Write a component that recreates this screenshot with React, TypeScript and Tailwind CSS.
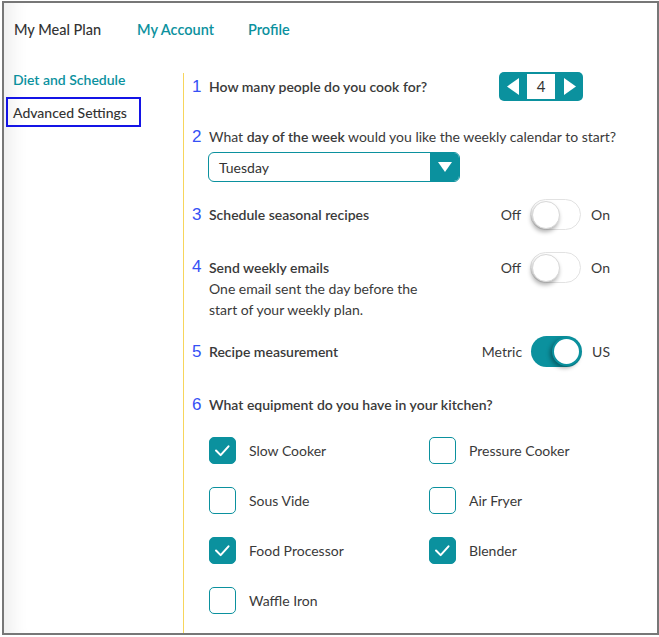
import React from 'react'

const TEAL = 'bg-[#0b919e]'

function Num({ n }: { n: number }) {
  return (
    <span className="w-[17px] shrink-0 text-[17px] leading-[20px] text-[#3551f5] font-['Liberation_Sans',Arial,sans-serif]">
      {n}
    </span>
  )
}

function Toggle({ on }: { on: boolean }) {
  if (on) {
    return (
      <div className="w-[51px] h-[31px] rounded-full bg-[#0b919e] flex items-center justify-end pr-[1px]">
        <div className="w-[29px] h-[29px] rounded-full bg-white border-2 border-[#0b919e] shadow-[-2px_2px_4px_rgba(0,0,0,0.35)]" />
      </div>
    )
  }
  return (
    <div className="w-[51px] h-[31px] rounded-full bg-white border border-[#e2e2e2] flex items-center pl-[1px]">
      <div className="w-[28px] h-[28px] rounded-full bg-white border border-[#d8d8d8] shadow-[-1px_3px_4px_rgba(0,0,0,0.3)]" />
    </div>
  )
}

function ToggleRow({ off, on, value }: { off: string; on: string; value: boolean }) {
  return (
    <div className="flex items-center text-[14px] text-[#3a3a3a]">
      <span className="mr-[9px]">{off}</span>
      <Toggle on={value} />
      <span className="ml-[10px]">{on}</span>
    </div>
  )
}

function Check({ label, checked }: { label: string; checked: boolean }) {
  return (
    <div className="flex items-center h-[27px]">
      <div
        className={`w-[27px] h-[27px] rounded-[5px] border border-[#0b919e] flex items-center justify-center ${checked ? TEAL : 'bg-white'}`}
      >
        {checked && (
          <svg width="27" height="27" viewBox="0 0 27 27">
            <polyline points="6.5,13.5 11.5,18.5 20,9" fill="none" stroke="white" strokeWidth="2.2" strokeLinecap="round" strokeLinejoin="round" />
          </svg>
        )}
      </div>
      <span className="ml-[13px] text-[14px] text-[#3a3a3a]">{label}</span>
    </div>
  )
}

const EQUIPO = [
  { label: 'Slow Cooker', checked: true },
  { label: 'Pressure Cooker', checked: false },
  { label: 'Sous Vide', checked: false },
  { label: 'Air Fryer', checked: false },
  { label: 'Food Processor', checked: true },
  { label: 'Blender', checked: true },
  { label: 'Waffle Iron', checked: false },
]

export default function App() {
  return (
    <div className="w-[659px] h-[637px] bg-white font-['Lato','Noto_Sans',sans-serif] text-[#333]">
      <div className="ml-[2px] mt-[1px] w-[657px] h-[634px] border-2 border-[#777] bg-white shadow-[inset_22px_0_18px_-14px_rgba(0,0,0,0.07)] flex flex-col">
        {/* Top nav */}
        <div className="h-[67px] pt-[17px] pl-[10px] flex text-[14.5px] leading-[20px]">
          <span className="font-medium text-[#333]">My Meal Plan</span>
          <span className="ml-[36px] font-semibold text-[#0b919e]">My Account</span>
          <span className="ml-[34px] font-semibold text-[#0b919e]">Profile</span>
        </div>

        <div className="flex flex-1">
          {/* Sidebar */}
          <div className="w-[179px] shrink-0 text-[14px]">
            <div className="pl-[9px] leading-[20px] font-semibold text-[#0b919e]">Diet and Schedule</div>
            <div className="ml-[2px] mt-[7px] w-[135px] h-[30px] border-2 border-[#1414e6] pl-[5px] flex items-center font-medium text-[#333]">
              Advanced Settings
            </div>
          </div>

          {/* Main */}
          <div className="flex-1 border-l border-[#f7d55c] pl-[8px] pt-[2px] mt-[3px] text-[14px]">
            {/* 1 */}
            <div className="w-[418px] h-[29px] flex items-center -mt-[3px]">
              <Num n={1} />
              <span className="flex-1 font-semibold text-[#3a3a3a]">How many people do you cook for?</span>
              <div className={`mr-[27px] w-[84px] h-[29px] rounded-[5px] ${TEAL} flex items-center`}>
                <div className="w-[28px] flex justify-center">
                  <svg width="13" height="17" viewBox="0 0 13 17"><polygon points="12,0 12,17 0,8.5" fill="white" /></svg>
                </div>
                <div className="w-[28px] h-[25px] bg-white flex items-center justify-center text-[15px] text-[#333]">4</div>
                <div className="w-[28px] flex justify-center">
                  <svg width="13" height="17" viewBox="0 0 13 17"><polygon points="1,0 1,17 13,8.5" fill="white" /></svg>
                </div>
              </div>
            </div>

            {/* 2 */}
            <div className="mt-[26px] flex items-center leading-[20px]">
              <Num n={2} />
              <span className="text-[#3a3a3a]">
                What <b className="font-semibold">day of the week</b> would you like the weekly calendar to start?
              </span>
            </div>
            <div className="mt-[5px] ml-[16px] w-[252px] h-[30px] border border-[#0b919e] rounded-[6px] flex overflow-hidden">
              <span className="flex-1 pl-[10px] flex items-center text-[14px] text-[#333]">Tuesday</span>
              <div className={`w-[29px] ${TEAL} flex items-center justify-center`}>
                <svg width="14" height="10" viewBox="0 0 14 10"><polygon points="0,0 14,0 7,10" fill="white" /></svg>
              </div>
            </div>

            {/* 3 */}
            <div className="mt-[17px] w-[418px] h-[31px] flex items-center">
              <Num n={3} />
              <span className="flex-1 font-semibold text-[#3a3a3a]">Schedule seasonal recipes</span>
              <ToggleRow off="Off" on="On" value={false} />
            </div>

            {/* 4 */}
            <div className="mt-[22px] w-[418px] flex items-start">
              <div className="pt-[5px] w-[17px] shrink-0 flex"><Num n={4} /></div>
              <div className="flex-1 pt-[5px] leading-[21px] text-[#3a3a3a]">
                <div className="font-semibold">Send weekly emails</div>
                <div>One email sent the day before the</div>
                <div>start of your weekly plan.</div>
              </div>
              <ToggleRow off="Off" on="On" value={false} />
            </div>

            {/* 5 */}
            <div className="mt-[16px] w-[418px] h-[31px] flex items-center">
              <Num n={5} />
              <span className="flex-1 font-semibold text-[#3a3a3a]">Recipe measurement</span>
              <ToggleRow off="Metric" on="US" value={true} />
            </div>

            {/* 6 */}
            <div className="mt-[28px] flex items-center leading-[20px]">
              <Num n={6} />
              <span className="font-semibold text-[#3a3a3a]">What equipment do you have in your kitchen?</span>
            </div>
            <div className="mt-[22px] pl-[17px] grid grid-cols-[220px_200px] gap-y-[23px]">
              {EQUIPO.map(e => (
                <Check key={e.label} label={e.label} checked={e.checked} />
              ))}
            </div>
          </div>
        </div>
      </div>
    </div>
  )
}
